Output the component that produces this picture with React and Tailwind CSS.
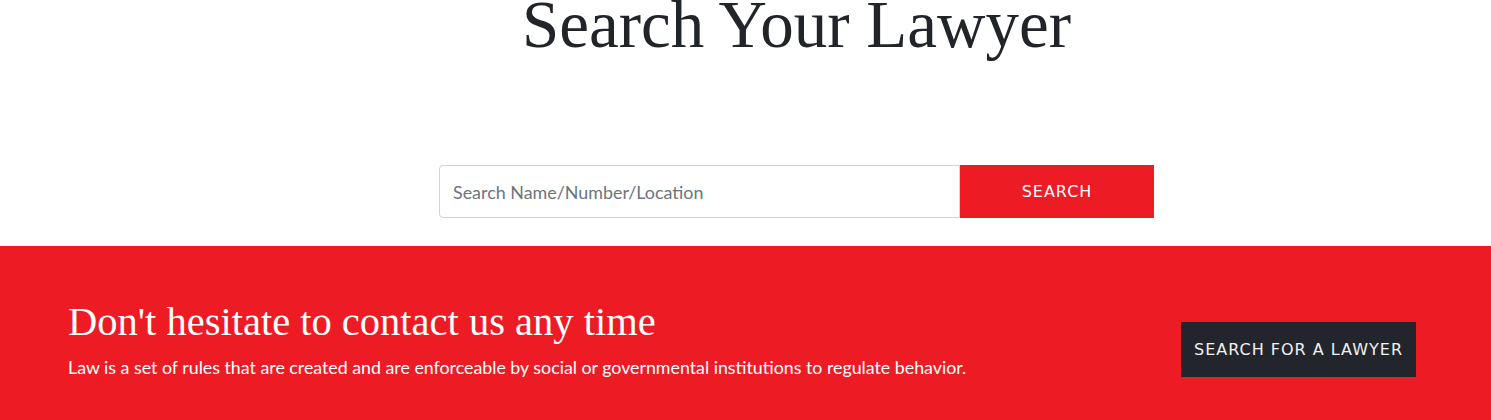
export default function App() {
  return (
    <div className="w-full bg-white overflow-hidden" style={{ fontFamily: "Lato, 'Noto Sans', sans-serif" }}>
      <section className="ml-[439px] w-[715px]">
        <h1 className="mt-[-9px] text-center text-[67px] leading-none text-[#212529] font-normal font-['Liberation_Serif',serif]">
          Search Your Lawyer
        </h1>

        <form className="mt-[107px] flex h-[53px]" onSubmit={(e) => e.preventDefault()}>
          <input
            type="text"
            placeholder="Search Name/Number/Location"
            className="flex-1 min-w-0 h-full rounded-l-[4px] border border-[#ced4da] bg-white pl-[13px] text-[17.9px] text-[#495057] placeholder-[#6c757d] focus:outline-none font-['Lato',sans-serif]"
          />
          <button
            type="submit"
            className="w-[194px] h-full bg-[#ed1c24] text-white text-[16px] tracking-[1px] font-['DejaVu_Sans',sans-serif]"
          >
            SEARCH
          </button>
        </form>
      </section>

      <section className="mt-[28px] bg-[#ed1c24] pl-[68px] pr-[75px] pt-[52px] pb-[60px] flex items-start justify-between">
        <div>
          <h2 className="text-[40.5px] leading-[48px] text-white font-normal font-['Liberation_Serif',serif]">
            Don't hesitate to contact us any time
          </h2>
          <p className="mt-[8px] text-[17.8px] leading-[27px] text-white font-['Lato',sans-serif]">
            Law is a set of rules that are created and are enforceable by social or governmental institutions to regulate behavior.
          </p>
        </div>
        <a
          href="#"
          className="mt-[24px] w-[235px] h-[55px] shrink-0 flex items-center justify-center bg-[#22262c] text-[#f1f1f1] text-[16px] tracking-[1px] font-['DejaVu_Sans',sans-serif]"
        >
          SEARCH FOR A LAWYER
        </a>
      </section>
    </div>
  );
}
